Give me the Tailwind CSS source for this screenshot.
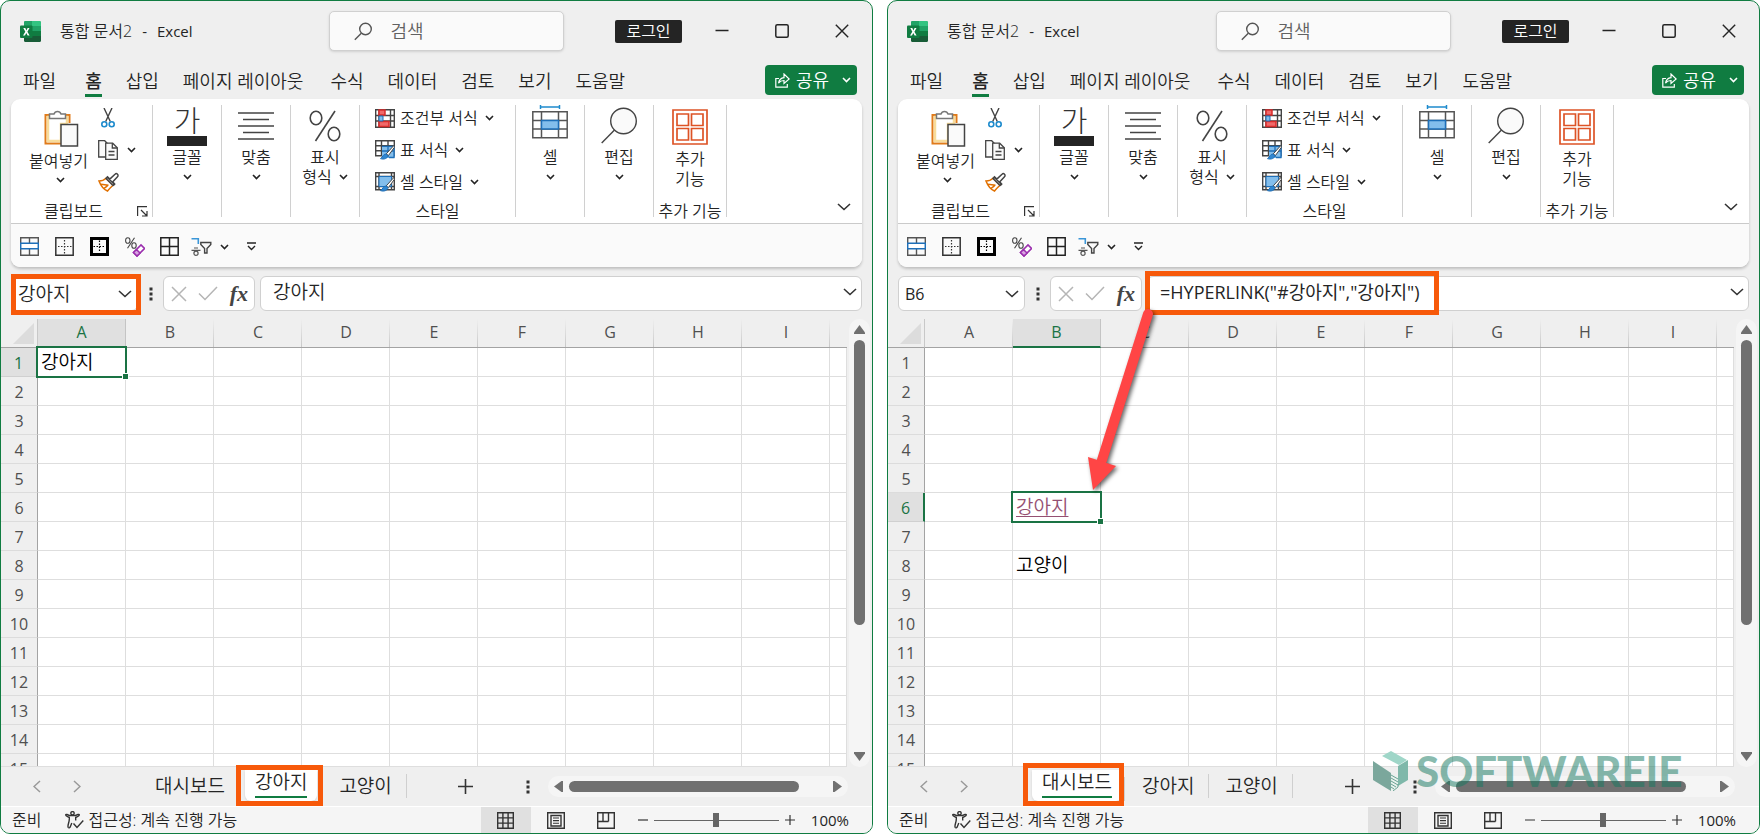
<!DOCTYPE html>
<html lang="ko">
<head>
<meta charset="utf-8">
<title>통합 문서2 - Excel</title>
<script src="https://cdn.jsdelivr.net/npm/@tailwindcss/browser@4"></script>
</head>
<body class="bg-white font-['Open_Sans','Noto_Sans_CJK_KR',sans-serif] font-[350] text-[#242424]">
<main id="app" class="relative grid h-screen grid-cols-2 gap-[14px] overflow-hidden"></main>

<script>
const chev = `<svg class="h-[6px] w-[9px] shrink-0" viewBox="0 0 9 6" fill="none" stroke="#242424" stroke-width="1.6"><path d="M1 1l3.500 3.500L8 1"/></svg>`;
const bigChev = `<svg class="h-[8px] w-[14px] shrink-0" viewBox="0 0 14 8" fill="none" stroke="#333" stroke-width="1.6"><path d="M1 1l6 5.500L13 1"/></svg>`;
const dots = `<svg class="h-[14px] w-[4px] shrink-0" viewBox="0 0 4 14" fill="#333"><path d="M.5.5h3v3h-3zM.5 5.500h3v3h-3zM.5 10.500h3v3h-3z"/></svg>`;

const ic = {
  logo: `<svg class="h-[21px] w-[21px]" viewBox="0 0 21 21"><path d="M5 0h14.500a1.500 1.500 0 0 1 1.500 1.500V5H12L4 5V1a1 1 0 0 1 1-1z" fill="#21A366"/><path d="M12 0h7.500a1.500 1.500 0 0 1 1.500 1.500V5h-9z" fill="#33C481"/><path d="M4 5h8v5H4z" fill="#107C41"/><path d="M12 5h9v5h-9z" fill="#21A366"/><path d="M4 10h8v5H4z" fill="#185C37"/><path d="M12 10h9v5h-9z" fill="#107C41"/><path d="M4 15h17v4.500a1.500 1.500 0 0 1-1.500 1.500h-14A1.500 1.500 0 0 1 4 19.500z" fill="#185C37"/><rect y="4.500" width="12.500" height="12.500" rx="1" fill="#107C41"/><path d="M3.300 7h2l1.100 2.400L7.600 7h1.900L7.400 10.700 9.600 14.500H7.600L6.300 12 5 14.500H3L5.300 10.700z" fill="#fff"/></svg>`,
  search: `<svg class="h-[19px] w-[19px]" viewBox="0 0 19 19" fill="none" stroke="#555" stroke-width="1.400"><circle cx="11.500" cy="7" r="5.800"/><path d="M7.300 11.200L.8 17.800"/></svg>`,
  paste: `<svg class="h-[38px] w-[35px]" viewBox="0 0 35 38" fill="none"><path d="M7 6H1.500v28.500h16" stroke="#E07B1A" stroke-width="2"/><path d="M19 6h6.500v8" stroke="#E07B1A" stroke-width="2"/><path d="M4 8h19v7h-6v17H4z" fill="#fff" stroke="#F8DC9A" stroke-width="2.500"/><path d="M5.500 9.500V5h4.500a3.700 3.700 0 0 1 7 0h4.500v4.500z" fill="#fff" stroke="#777" stroke-width="1.500"/><path d="M17 15.500h16.500V37H17z" fill="#fafafa" stroke="#444" stroke-width="1.500"/></svg>`,
  cut: `<svg class="h-[20px] w-[14px]" viewBox="0 0 14 20" fill="none"><path d="M3 0l6.300 13.500M11 0L4.700 13.500" stroke="#444" stroke-width="1.400"/><circle cx="3.300" cy="16.300" r="2.500" stroke="#1E8BCD" stroke-width="1.600"/><circle cx="10.700" cy="16.300" r="2.500" stroke="#1E8BCD" stroke-width="1.600"/></svg>`,
  copy: `<svg class="h-[20px] w-[20px]" viewBox="0 0 20 20" fill="#fafafa" stroke="#444" stroke-width="1.300"><path d="M.7 17V.7h6l3 3V17z"/><path d="M7.700 19.300V3.200h7l4.600 4.600v11.500z"/><path d="M14.300 3.200V8h5M10.500 11.500h6M10.500 15h6" fill="none"/></svg>`,
  brush: `<svg class="h-[20px] w-[21px]" viewBox="0 0 21 20" fill="none" stroke-width="1.500"><path d="M1 9c3 0 5-.8 7-2.800l7 7C12.500 15.500 11 17 9.500 19 6.500 17.800 2.700 13.500 1 9z" fill="#fff" stroke="#E07000"/><path d="M3 12.300l7.500 1M6 16.300l3.500-2.500" stroke="#E07000"/><path d="M9 5l8 8M9.500 4.800L8 6.500l7 7 1.600-1.600-2-2 4.900-5.200a1.700 1.700 0 0 0-2.500-2.500l-5.200 4.900z" fill="#fff" stroke="#444"/></svg>`,
  launcher: `<svg class="h-[11px] w-[11px]" viewBox="0 0 11 11" fill="none" stroke="#333" stroke-width="1.200"><path d="M10 .6H.6V10M4 4l6 6M10 5v5H5"/></svg>`,
  align: `<svg class="h-[28px] w-[36px]" viewBox="0 0 36 28" stroke="#444" stroke-width="1.500"><path d="M0 1h36M5 7.500h26M0 14h36M5 20.500h26M0 27h36"/></svg>`,
  percent: `<svg class="h-[32px] w-[32px]" viewBox="0 0 32 32" fill="none" stroke="#444" stroke-width="1.600"><ellipse cx="7" cy="8" rx="5.800" ry="6.800"/><ellipse cx="25" cy="24" rx="5.800" ry="6.800"/><path d="M26 1L6.500 31"/></svg>`,
  cond: `<svg class="h-[19px] w-[20px]" viewBox="0 0 20 19" fill="none"><path d="M.7.7h18.600v17.600H.7zM4 .7v17.600M15.500.7v17.600M.7 6.500h18.600M.7 12h18.600" stroke="#444" stroke-width="1.400"/><path d="M4 1h6v5H4zM4 12.500h10v5H4z" fill="#F06A6A" stroke="#D92C2C" stroke-width="1.500"/><path d="M4 7h4v5H4z" fill="#83BEEC" stroke="#1E6FB8"/></svg>`,
  tableStyle: `<svg class="h-[20px] w-[20px]" viewBox="0 0 20 20" fill="none"><path d="M.7.7h18.600v15H.7zM6.500.7v15M13 .7v15M.7 5.700h18.600M.7 10.700h18.600" stroke="#444" stroke-width="1.400"/><path d="M7 6.300h12.500V18H7z" fill="#83BEEC"/><path d="M7 6.300h12.500M13 6.300v11M7 11h12.500M19 6v12M14 17.500h5.500" stroke="#1E6FB8" stroke-width="1.300"/><path d="M18.800 5.500l-7.500 8.300 2 1.900 6.200-8.500z" fill="#fff" stroke="#444"/><path d="M11 14c-3 0-3 3-5.500 4.600 3.500 1.200 7-.1 7.500-3z" fill="#2F86D0" stroke="#1E6FB8"/></svg>`,
  cellStyle: `<svg class="h-[20px] w-[20px]" viewBox="0 0 20 20" fill="none"><path d="M.7.7h18.600v17H.7zM4 .7v17M16.500.7v17M.7 4.500h18.600M.7 14.500h18.600" stroke="#444" stroke-width="1.400"/><path d="M4 4.500h12.500v10H4z" fill="#83BEEC" stroke="#1E6FB8"/><path d="M18.800 5.500l-7.500 8.300 2 1.900 6.200-8.500z" fill="#fff" stroke="#444"/><path d="M11 14c-3 0-3 3-5.500 4.600 3.500 1.200 7-.1 7.500-3z" fill="#2F86D0" stroke="#1E6FB8"/></svg>`,
  cells: `<svg class="h-[34px] w-[36px]" viewBox="0 0 36 34" fill="none"><path d="M8.500 2h19M8.500 0v4M27.500 0v4" stroke="#1E8BCD" stroke-width="1.500"/><path d="M.8 6.800h34.400v26H.8zM9.500 6.800v26M26.500 6.800v26M.8 15.500h34.400M.8 24h34.400" stroke="#555" stroke-width="1.500"/><path d="M9.500 15.500h17V24h-17z" fill="#83BEEC" stroke="#1E6FB8" stroke-width="1.500"/></svg>`,
  edit: `<svg class="h-[38px] w-[37px]" viewBox="0 0 37 38" fill="none" stroke="#444" stroke-width="1.400"><circle cx="22.500" cy="14" r="12.800" fill="#fafafa"/><path d="M13.500 23L.7 36"/></svg>`,
  addin: `<svg class="h-[36px] w-[36px]" viewBox="0 0 36 36" fill="#fff" stroke="#DD5326" stroke-width="1.700"><path d="M1 1h34v34H1z"/><path d="M5 5h11.500v11.500H5zM19.500 5H31v11.500H19.500zM5 19.500h11.500V31H5zM19.500 19.500H31V31H19.500z"/></svg>`,
  q1: `<svg class="h-[19px] w-[19px]" viewBox="0 0 19 19" fill="none"><path d="M.7.7h17.600v17.600H.7zM9.500.7v17.600" stroke="#555" stroke-width="1.400"/><path d="M.7 6.200h17.600v5.600H.7z" fill="#fff" stroke="#1E6FB8" stroke-width="1.500"/></svg>`,
  q2: `<svg class="h-[19px] w-[19px]" viewBox="0 0 19 19" fill="none" stroke="#333"><path d="M.8.8h17.400v17.400H.8z" stroke-width="1.500"/><path d="M9.500 3v13.500M3 9.500h13.500" stroke-width="1.200" stroke-dasharray="1.500 1.500"/></svg>`,
  q3: `<svg class="h-[19px] w-[19px]" viewBox="0 0 19 19" fill="none" stroke="#000"><path d="M1.500 1.500h16v16h-16z" stroke-width="3"/><path d="M9.500 3.500v12M3.500 9.500h12" stroke-width="1.200" stroke-dasharray="1.500 1.500"/></svg>`,
  q4: `<svg class="h-[20px] w-[20px]" viewBox="0 0 20 20" fill="none"><g stroke="#444" stroke-width="1.100"><ellipse cx="2.800" cy="3.500" rx="2.200" ry="2.800"/><ellipse cx="9" cy="8.500" rx="2.200" ry="2.800"/><path d="M9.500.8L2.500 11.200"/></g><path d="M8.500 15.500l7.500-7.500 3.500 3.500-7.500 7.500z" fill="#fff" stroke="#9B2FAE" stroke-width="1.600"/><path d="M8.500 15.500l3-3 3.500 3.500-3 3z" fill="#D9A5E2" stroke="#9B2FAE" stroke-width="1.500"/></svg>`,
  q5: `<svg class="h-[19px] w-[19px]" viewBox="0 0 19 19" fill="none" stroke="#222" stroke-width="1.500"><path d="M.8.8h17.400v17.400H.8zM9.500.8v17.400M.8 9.500h17.400"/></svg>`,
  q6: `<svg class="h-[19px] w-[21px]" viewBox="0 0 21 19" fill="none"><path d="M.5 1.800h6.800V7" stroke="#3A96D8" stroke-width="1.600"/><path d="M3 11h4M.5 13.300h9" stroke="#555" stroke-width="1.200"/><circle cx="5" cy="16.300" r="2.100" stroke="#555" stroke-width="1.200"/><path d="M9.800 5.500h10v2l-3.800 4v4.500h-2.400v-4.500L9.800 7.500z" stroke="#444" stroke-width="1.400"/></svg>`,
  more: `<svg class="h-[9px] w-[9px]" viewBox="0 0 9 9" fill="none" stroke="#242424" stroke-width="1.400"><path d="M0 1h9M1 4l3.500 3.500L8 4"/></svg>`,
  share: `<svg class="h-[15px] w-[15px]" viewBox="0 0 15 15" fill="none" stroke="#fff" stroke-width="1.200"><path d="M4 5.500H.8v8.700h11.500V11"/><path d="M3.500 10C4.200 6.500 6.500 4.800 9 4.600V1l5.200 5L9 10.500V7.500C6.800 7.500 5 8.200 3.500 10z"/></svg>`,
  access: `<svg class="h-[18px] w-[19px]" viewBox="0 0 19 18" fill="none" stroke="#333" stroke-width="1.400"><circle cx="7.500" cy="2.300" r="1.700"/><path d="M1 3.200c-.8 1 .2 1.800 3.300 3.300.5 4-2 7.500-1.200 9.700.5 1 1.500.8 2 0l1.700-4.200M14 3.200c.8 1-.2 1.800-3.300 3.300v3M1.300 3.200l3 1.300h6.200l3.200-1.300"/><path d="M8.500 12.500l3.500 4 6.300-7"/></svg>`,
  v1: `<svg class="h-[17px] w-[17px]" viewBox="0 0 17 17" fill="none" stroke="#333" stroke-width="1.400"><path d="M.7.7h15.600v15.600H.7zM5.900.7v15.600M11.100.7v15.600M.7 5.900h15.600M.7 11.100h15.600"/></svg>`,
  v2: `<svg class="h-[17px] w-[18px]" viewBox="0 0 18 17" fill="none" stroke="#333" stroke-width="1.400"><path d="M.7.7h16.600v15.600H.7z"/><path d="M4 3.500h10v10.500H4z"/><path d="M6 6h6M6 8.600h6M6 11.200h6" stroke-width="1.100"/></svg>`,
  v3: `<svg class="h-[17px] w-[18px]" viewBox="0 0 18 17" fill="none" stroke="#333" stroke-width="1.400"><path d="M.7.7h16.600v15.600H.7zM6 .7v8.800M11.500.7v8.800M.7 9.500h10.800"/></svg>`
};

const COLS = ['A','B','C','D','E','F','G','H','I'];

const group = (icon, text) => `
  <button class="flex w-[69px] flex-col items-center border-r border-[#d0d0d0]">
    <span class="flex h-[41px] items-center">${icon}</span>
    <span class="text-[16px] leading-[22px]">${text}</span>
    <span class="mt-[3px] flex h-[12px] items-center">${chev}</span>
  </button>`;

const styleRow = (icon, text) => `<button class="flex h-[26px] items-center gap-[5px]">${icon}<span class="mr-[2px] text-[16px] leading-[22px]">${text}</span>${chev}</button>`;

function sheetTable(o) {
  const head = COLS.map((c, i) => i === o.col
    ? `<th scope="col" class="h-[29px] border-r border-b-2 border-r-[#c4c4c4] border-b-[#1a7344] bg-[#e0e0e0] p-0 pb-px text-[16px] leading-[22px] font-normal text-[#1a7344]">${c}</th>`
    : `<th scope="col" class="h-[29px] border-b border-[#a3a3a3] bg-[linear-gradient(to_bottom,#efefef,#c8c8c8)] bg-[length:1px_100%] bg-right bg-no-repeat p-0 pb-[2px] text-[16px] leading-[22px] font-normal text-[#505050]">${c}</th>`).join('');
  let rows = '';
  for (let r = 1; r <= 15; r++) {
    const rh = r === o.row
      ? `<th scope="row" class="h-[29px] border-r-2 border-b border-r-[#1a7344] border-b-[#d0d0d0] bg-[#e0e0e0] p-0 pt-[2px] text-[16px] leading-[22px] font-normal text-[#1a7344]">${r}</th>`
      : `<th scope="row" class="h-[29px] border-r border-b border-r-[#a3a3a3] border-b-[#dcdcdc] p-0 pt-[2px] text-[16px] leading-[22px] font-normal text-[#505050]">${r}</th>`;
    const cells = COLS.map((c, i) => {
      const sel = r === o.row && i === o.col;
      const body = o.cells[c + r] || '';
      return `<td class="relative h-[29px] border-r border-b border-[#dedede] bg-white py-0 pr-0 pl-[3px] text-[19px] leading-[24px] whitespace-nowrap text-black">${body}${sel
        ? '<span class="absolute -top-[2px] -right-[2px] -bottom-[2px] -left-[2px] z-10 border-2 border-[#1a7344]"></span><span class="absolute -right-[4px] -bottom-[4px] z-10 size-[7px] border border-white bg-[#1a7344]"></span>' : ''}</td>`;
    }).join('');
    rows += `<tr>${rh}${cells}<td class="border-r border-b border-[#dedede] bg-white p-0"></td></tr>`;
  }
  return `<table class="w-full table-fixed border-separate border-spacing-0">
    <colgroup><col class="w-[37px]">${'<col class="w-[88px]">'.repeat(9)}<col></colgroup>
    <thead><tr><th class="h-[29px] border-r border-b border-r-[#c8c8c8] border-b-[#a3a3a3] p-0"><svg class="ml-[12px] h-[21px] w-[21px]" viewBox="0 0 21 21"><path d="M21 0v21H0z" fill="#dcdcdc"/></svg></th>${head}<th class="border-b border-[#a3a3a3] p-0"></th></tr></thead>
    <tbody>${rows}</tbody></table>`;
}

function win(o) {
  const sheets = ['대시보드', '강아지', '고양이'].map((n, i) => i === o.sheet
    ? `<button class="flex h-[31px] items-start rounded-b-[6px] bg-white px-[10px] pt-px text-[19px] leading-[22px] shadow-sm"><span class="block border-b-2 border-[#107c41] pb-[3px]">${n}</span></button>${i === 0 ? '<span class="mt-[7px] mr-[3px] ml-[2px] h-[24px] w-px bg-[#cfcfcf]"></span>' : '<span class="w-[8px]"></span>'}`
    : `<button class="h-[31px] px-[14px] pt-px text-[19px] leading-[24px]">${n}</button><span class="${i === 0 ? 'w-[6px]' : 'mt-[4px] mr-[2px] h-[24px] w-px bg-[#cfcfcf]'}"></span>`).join('');
  return `
<section aria-label="Excel" class="flex min-w-0 flex-col overflow-hidden rounded-[10px] border border-[#107c41] bg-[#efefef]">
  <header class="relative flex h-[60px] shrink-0 items-center pl-[19px]">
    ${ic.logo}
    <h1 class="ml-[19px] flex text-[15px] leading-[22px] font-normal whitespace-pre"><span class="text-[16px] font-[350]">통합 문서2</span><span class="mx-[10px]">-</span><span>Excel</span></h1>
    <label class="absolute top-[10px] left-1/2 -ml-[108px] flex h-[40px] w-[235px] items-center gap-[18px] rounded-[5px] border border-[#d0d0d0] bg-[#fafafa] pl-[24px] shadow-sm">
      ${ic.search}<input type="text" placeholder="검색" aria-label="검색" class="w-[150px] bg-transparent text-[18px] leading-[24px] outline-none placeholder:text-[#616161]">
    </label>
    <div class="ml-auto flex items-center">
      <button class="mr-[33px] h-[23px] w-[67px] rounded-[2px] bg-[#242424] text-[16px] leading-[22px] text-white">로그인</button>
      <button aria-label="최소화" class="mr-[46px]"><svg class="h-[14px] w-[14px]" viewBox="0 0 14 14" stroke="#242424" stroke-width="1.400"><path d="M.5 6.500h13"/></svg></button>
      <button aria-label="최대화" class="mr-[46px]"><svg class="h-[14px] w-[14px]" viewBox="0 0 14 14" fill="none" stroke="#242424" stroke-width="1.500"><rect x=".8" y=".8" width="12.400" height="12.400" rx="1.500"/></svg></button>
      <button aria-label="닫기" class="mr-[23px]"><svg class="h-[14px] w-[14px]" viewBox="0 0 14 14" stroke="#242424" stroke-width="1.400"><path d="M.8.8l12.400 12.400M13.200.8L.8 13.200"/></svg></button>
    </div>
  </header>
  <nav class="flex h-[38px] shrink-0 items-start gap-[24px] pr-[15px] pl-[22px] text-[18px] leading-[26px] whitespace-nowrap">
    <a href="#" class="mt-[7px] mr-[5px]">파일</a>
    <a href="#" class="mt-[7px] h-[29px] border-b-3 border-[#107c41] font-medium">홈</a>
    <a href="#" class="mt-[7px]">삽입</a>
    <a href="#" class="mt-[7px] mr-[3px]">페이지 레이아웃</a>
    ${['수식','데이터','검토','보기','도움말'].map(t => `<a href="#" class="mt-[7px]">${t}</a>`).join('')}
    <button class="mt-[4px] ml-auto flex h-[30px] w-[92px] items-center gap-[6px] rounded-[4px] bg-[#107c41] pl-[10px] text-white">${ic.share}<span>공유</span><svg class="ml-[7px] h-[6px] w-[9px]" viewBox="0 0 9 6" fill="none" stroke="#fff" stroke-width="1.600"><path d="M1 1l3.500 3.500L8 1"/></svg></button>
  </nav>
  <div class="mx-[10px] shrink-0 rounded-[9px] bg-white shadow-[0_2px_3px_#00000033]">
    <div class="flex h-[124px] pt-[6px] pb-[6px] whitespace-nowrap">
      <div class="grid w-[142px] grid-cols-[87px_1fr] grid-rows-[100px_12px] border-r border-[#d0d0d0]">
        <button class="flex flex-col items-center pt-[4px] pl-[8px]"><span class="ml-[6px]">${ic.paste}</span><span class="mt-[3px] text-[16px] leading-[22px]">붙여넣기</span><span class="mt-[5px] flex h-[6px] pl-[4px]">${chev}</span></button>
        <div class="flex flex-col">
          <button aria-label="잘라내기" class="flex h-[29px] items-start pt-[3px] pl-[3px]">${ic.cut}</button>
          <button aria-label="복사" class="flex h-[32px] items-center gap-[9px]">${ic.copy}${chev}</button>
          <button aria-label="서식 복사" class="flex h-[32px] items-start pt-[6px]">${ic.brush}</button>
        </div>
        <div class="col-span-2 flex items-center pr-[4px] pl-[33px] text-[16px] leading-[12px]">클립보드<button aria-label="클립보드 옵션" class="ml-auto">${ic.launcher}</button></div>
      </div>
      ${group(`<span class="block w-[40px] border-b-10 border-[#242424] text-center text-[29px] leading-[30px] font-light text-[#333]">가</span>`, '글꼴')}
      ${group(ic.align, '맞춤')}
      <button class="flex w-[69px] flex-col items-center border-r border-[#d0d0d0] text-[16px] leading-[20px]"><span class="flex h-[42px] items-center">${ic.percent}</span><span>표시</span><span class="flex items-center gap-[7px]">형식 ${chev}</span></button>
      <div class="flex w-[156px] flex-col border-r border-[#d0d0d0] pl-[15px]">
        <div class="flex h-[100px] flex-col gap-[6px]">${styleRow(ic.cond, '조건부 서식')}${styleRow(ic.tableStyle, '표 서식')}${styleRow(ic.cellStyle, '셀 스타일')}</div>
        <span class="-ml-[15px] text-center text-[16px] leading-[12px]">스타일</span>
      </div>
      ${group(`<span class="mb-[7px]">${ic.cells}</span>`, '셀')}
      ${group(ic.edit, '편집')}
      <div class="flex w-[73px] flex-col items-center border-r border-[#d0d0d0] text-[16px] leading-[20px]"><button class="flex h-[100px] flex-col items-center pt-[4px]">${ic.addin}<span class="mt-[4px]">추가</span><span>기능</span></button><span class="leading-[12px]">추가 기능</span></div>
      <button aria-label="리본 축소" class="mr-[11px] mb-[6px] ml-auto self-end">${bigChev}</button>
    </div>
    <div class="flex h-[44px] items-center gap-[16px] rounded-b-[9px] border-t border-[#cacaca] bg-[#fafafa] pt-[2px] pl-[9px]">
      <button aria-label="셀 병합">${ic.q1}</button><button aria-label="테두리 없음">${ic.q2}</button><button aria-label="굵은 바깥쪽 테두리">${ic.q3}</button><button aria-label="서식 지우기">${ic.q4}</button><button aria-label="모든 테두리" class="-ml-px">${ic.q5}</button>
      <button aria-label="정렬 및 필터" class="-ml-[4px] flex items-center gap-[8px]">${ic.q6}${chev}</button><button aria-label="빠른 실행 도구 모음" class="ml-[2px]">${ic.more}</button>
    </div>
  </div>
  <div class="flex h-[52px] shrink-0 items-center pt-px pr-[10px] pl-[10px]">
    <label class="flex h-[35px] w-[127px] items-center rounded-[6px] border border-[#d0d0d0] bg-white pr-[5px] pl-[6px]"><input aria-label="이름 상자" value="${o.name}" class="w-full min-w-0 bg-transparent leading-[26px] outline-none ${o.row === 1 ? 'text-[19px]' : 'text-[16px] font-normal'}">${bigChev}</label>
    <span class="mr-[10px] ml-[11px]">${dots}</span>
    <div class="flex h-[35px] w-[92px] items-center justify-between rounded-[6px] border border-[#d0d0d0] bg-white pr-[6px] pl-[7px]">
      <button aria-label="취소"><svg class="h-[16px] w-[16px]" viewBox="0 0 16 16" stroke="#b5b5b5" stroke-width="1.500"><path d="M1 1l14 14M15 1L1 15"/></svg></button>
      <button aria-label="입력"><svg class="h-[15px] w-[20px]" viewBox="0 0 20 15" fill="none" stroke="#b5b5b5" stroke-width="1.500"><path d="M1 7.500L7 13.500 19 1"/></svg></button>
      <button aria-label="함수 삽입" class="font-['Liberation_Serif',serif] text-[22px] leading-[26px] font-bold text-[#444] italic">fx</button>
    </div>
    <label class="ml-[5px] flex h-[35px] min-w-0 flex-1 items-center rounded-[6px] border border-[#d0d0d0] bg-white pr-[4px] pb-[3px] pl-[12px]"><input aria-label="수식 입력줄" value='${o.formula}' class="min-w-0 flex-1 bg-transparent leading-[26px] outline-none ${o.row === 1 ? 'text-[19px]' : 'text-[18px] font-normal'}">${bigChev}</label>
  </div>
  <div class="flex min-h-0 flex-1">
    <div class="min-w-0 flex-1 overflow-hidden border-b border-[#dedede]">${sheetTable(o)}</div>
    <div class="mr-[2px] ml-[2px] flex w-[21px] flex-col items-center rounded-full bg-[#f5f5f5] py-[6px]">
      <svg class="h-[9px] w-[11px]" viewBox="0 0 11 9" fill="#707070"><path d="M5.500 0L11 7.500v1.500H0V7.500z"/></svg>
      <div class="mt-[6px] mb-[5px] w-full flex-1"><div class="mx-auto h-[70%] w-[11px] rounded-full bg-[#707070]"></div></div>
      <svg class="h-[9px] w-[11px]" viewBox="0 0 11 9" fill="#707070"><path d="M5.500 9L11 1.500V0H0v1.500z"/></svg>
    </div>
  </div>
  <div class="flex h-[40px] shrink-0 items-center border-b border-white">
    <button aria-label="이전 시트" class="ml-[32px]"><svg class="h-[13px] w-[8px]" viewBox="0 0 8 13" fill="none" stroke="#999" stroke-width="1.500"><path d="M7 1L1 6.500 7 12"/></svg></button>
    <button aria-label="다음 시트" class="ml-[32px]"><svg class="h-[13px] w-[8px]" viewBox="0 0 8 13" fill="none" stroke="#999" stroke-width="1.500"><path d="M1 1l6 5.500L1 12"/></svg></button>
    <div class="${o.sheet === 0 ? 'ml-[64px]' : 'ml-[60px]'} flex h-full items-start pt-[3px] whitespace-nowrap">${sheets}</div>
    <div class="ml-auto flex items-center">
      <button aria-label="새 시트"><svg class="h-[15px] w-[15px]" viewBox="0 0 15 15" stroke="#333" stroke-width="1.600"><path d="M7.500 0v15M0 7.500h15"/></svg></button>
      <span class="ml-[53px]">${dots}</span>
      <div class="mr-[24px] ml-[18px] flex h-[21px] w-[300px] items-center rounded-full bg-[#f5f5f5] px-[6px]">
        <svg class="h-[11px] w-[9px]" viewBox="0 0 9 11" fill="#707070"><path d="M0 5.500L7.500 0H9v11H7.500z"/></svg>
        <div class="mx-[6px] flex-1"><div class="h-[11px] w-[89%] rounded-full bg-[#707070]"></div></div>
        <svg class="h-[11px] w-[9px]" viewBox="0 0 9 11" fill="#707070"><path d="M9 5.500L1.500 0H0v11h1.500z"/></svg>
      </div>
    </div>
  </div>
  <footer class="flex h-[26px] shrink-0 items-center bg-[#f5f5f5] pl-[11px] text-[16px] leading-[22px] whitespace-nowrap">
    <span>준비</span>
    <button class="ml-[24px] flex items-center gap-[4px]">${ic.access}<span>접근성: 계속 진행 가능</span></button>
    <div class="ml-auto flex h-full items-center">
      <button aria-label="기본" class="flex h-full w-[50px] items-center justify-center bg-[#e0e0e0]">${ic.v1}</button>
      <button aria-label="페이지 레이아웃" class="flex h-full w-[50px] items-center justify-center">${ic.v2}</button>
      <button aria-label="페이지 나누기 미리 보기" class="flex h-full w-[50px] items-center justify-center">${ic.v3}</button>
      <button aria-label="축소" class="ml-[7px]"><svg class="h-[10px] w-[10px]" viewBox="0 0 10 10" stroke="#333" stroke-width="1.200"><path d="M0 5h10"/></svg></button>
      <input type="range" aria-label="확대/축소" value="50" class="mx-[6px] h-[14px] w-[125px] appearance-none bg-[linear-gradient(#666,#666)] bg-[length:100%_1px] bg-center bg-no-repeat [&::-webkit-slider-thumb]:h-[14px] [&::-webkit-slider-thumb]:w-[6px] [&::-webkit-slider-thumb]:appearance-none [&::-webkit-slider-thumb]:bg-[#666]">
      <button aria-label="확대"><svg class="h-[10px] w-[10px]" viewBox="0 0 10 10" stroke="#333" stroke-width="1.200"><path d="M0 5h10M5 0v10"/></svg></button>
      <span class="mr-[23px] ml-[16px] text-[15px] font-normal">100%</span>
    </div>
  </footer>
</section>`;
}

document.getElementById('app').innerHTML =
  win({ row: 1, col: 0, name: '강아지', formula: '강아지', sheet: 1, cells: { A1: '강아지' } }) +
  win({ row: 6, col: 1, name: 'B6', formula: '=HYPERLINK("#강아지","강아지")', sheet: 0,
        cells: { B6: '<a href="#" class="text-[#954f72] underline underline-offset-2">강아지</a>', B8: '고양이' } }) +
  `<div class="pointer-events-none absolute top-[274px] left-[11px] z-20 h-[41px] w-[130px] border-5 border-[#f7590a]"></div>
   <div class="pointer-events-none absolute top-[765px] left-[236px] z-20 h-[41px] w-[87px] border-5 border-[#f7590a]"></div>
   <div class="pointer-events-none absolute top-[271px] left-[1145px] z-20 h-[44px] w-[294px] border-5 border-[#f7590a]"></div>
   <div class="pointer-events-none absolute top-[763px] left-[1023px] z-20 h-[43px] w-[101px] border-5 border-[#f7590a]"></div>
   <svg class="pointer-events-none absolute top-[300px] left-[1080px] z-30 h-[200px] w-[90px] drop-shadow-[2px_2px_2px_#00000099]" viewBox="0 0 90 200"><path d="M68 14L22 160" stroke="#ff4545" stroke-width="10" stroke-linecap="round"/><path d="M8 157l28 9-23 24z" fill="#ff4545"/></svg>
   <div class="pointer-events-none absolute top-[751px] left-[1373px] z-30 flex items-center gap-[7px]">
     <svg class="h-[40px] w-[36px]" viewBox="0 0 36 40"><path d="M18 0l16 9-8 5L9 5z" fill="#9fd6c8"/><path d="M0 10l18 12v18L0 29z" fill="#7ba79c"/><path d="M25 15l10-6v20l-10 6z" fill="#7fb8aa"/><path d="M18 22l7 4v10l-7 4z" fill="#e9f1ee"/><path d="M18 24l7 4M18 27l7 4M18 30l7 4M18 33l5 3M18 36l3 2M20 40l5-4v-3" stroke="#6ba394" fill="none"/></svg>
     <span class="font-['Lato',sans-serif] text-[42px] leading-[38px] font-black text-[#13785f]/50">SOFTWAREIE</span>
   </div>`;
</script>
</body>
</html>
